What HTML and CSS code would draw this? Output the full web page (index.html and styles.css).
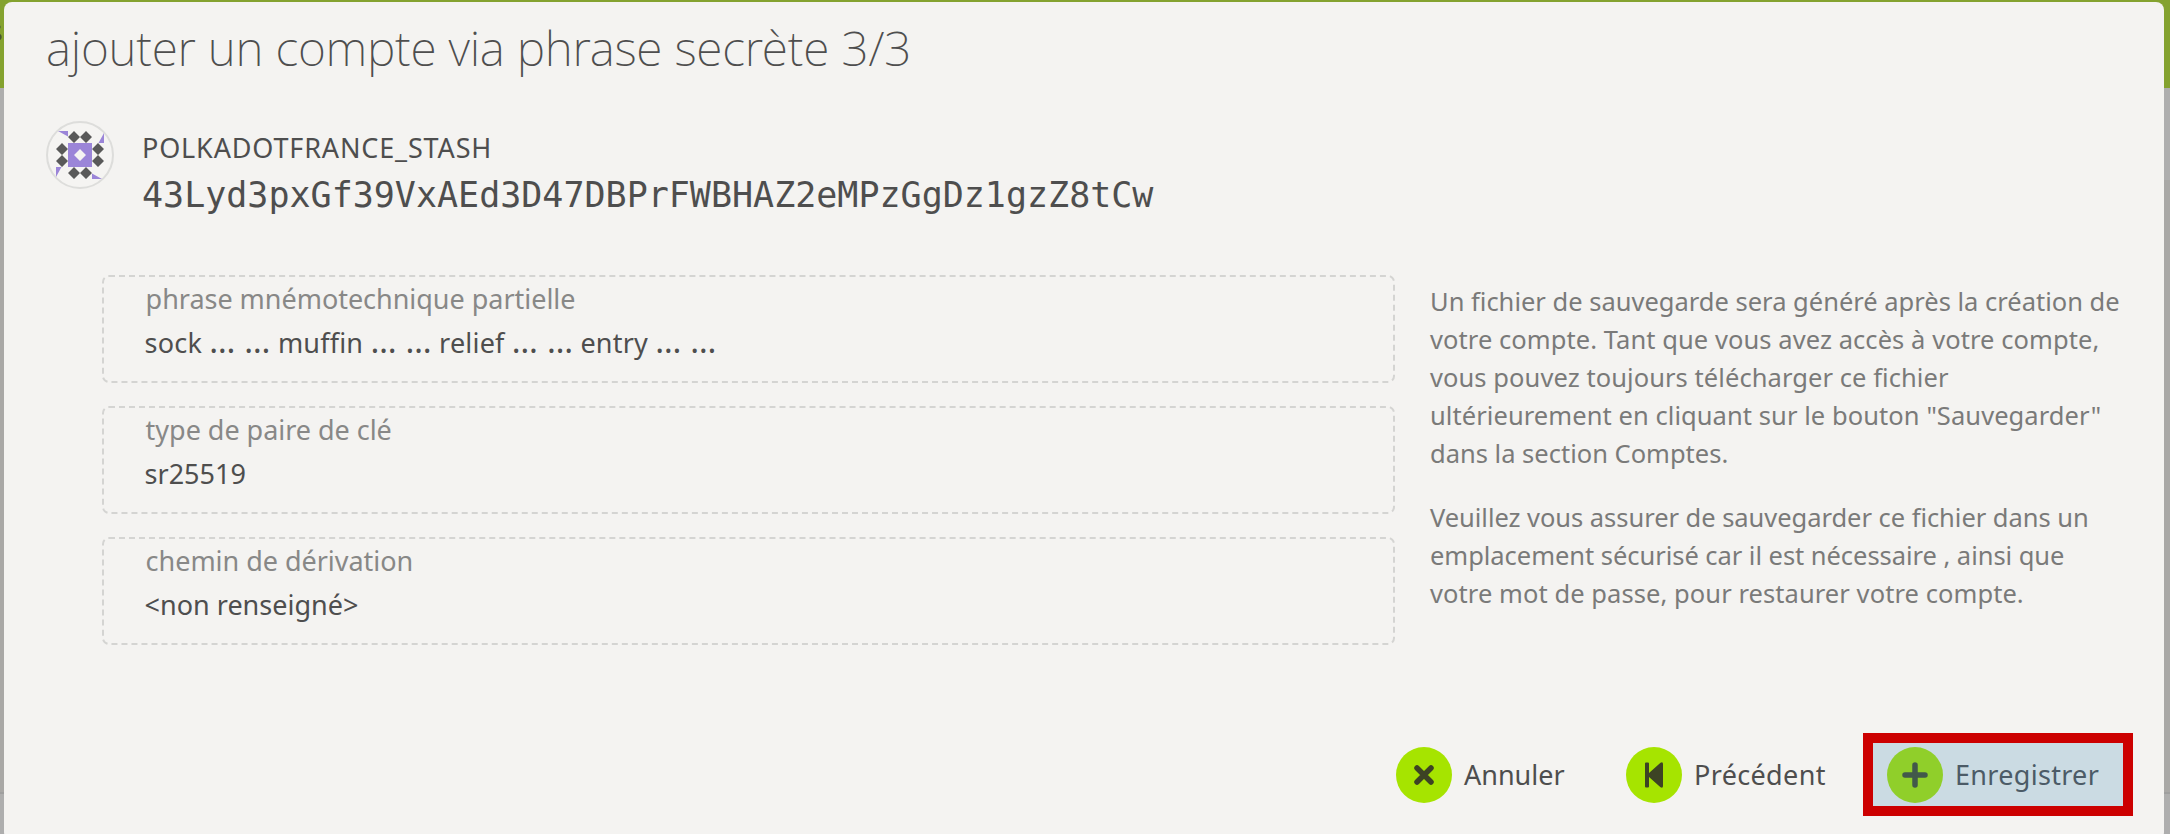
FILE: index.html
```html
<!DOCTYPE html>
<html lang="fr">
<head>
<meta charset="utf-8">
<title>ajouter un compte</title>
<link rel="stylesheet" href="styles.css">
</head>
<body>
<main class="modal">
  <h1 class="title">ajouter un compte via phrase secrète 3/3</h1>
  <section class="account">
    <svg class="avatar" viewBox="0 0 68 68">
      <circle cx="34" cy="34" r="33" fill="#f5f4f2" stroke="#dddddb" stroke-width="2"/>
      <g fill="#9b85d8">
        <path d="M22 22H46V46H22ZM34 28L28 34L34 40L40 34Z" fill-rule="evenodd"/>
        <path d="M12 10H22V15.500ZM58 12V22H52.500ZM46 52.500L56 58H46ZM10 46H15.500L10 56Z"/>
      </g>
      <path fill="#595959" d="M28 10l6 6-6 6-6-6zM40 10l6 6-6 6-6-6zM28 46l6 6-6 6-6-6zM40 46l6 6-6 6-6-6zM16 22l6 6-6 6-6-6zM16 34l6 6-6 6-6-6zM52 22l6 6-6 6-6-6zM52 34l6 6-6 6-6-6z"/>
    </svg>
    <div>
      <div class="name">POLKADOTFRANCE_STASH</div>
      <div class="address">43Lyd3pxGf39VxAEd3D47DBPrFWBHAZ2eMPzGgDz1gzZ8tCw</div>
    </div>
  </section>
  <section class="content">
    <div class="fields">
      <div class="field"><div class="label">phrase mnémotechnique partielle</div><div class="value mnemonic">sock <span>… …</span> muffin <span>… …</span> relief <span>… …</span> entry <span>… …</span></div></div>
      <div class="field"><div class="label">type de paire de clé</div><div class="value">sr25519</div></div>
      <div class="field"><div class="label">chemin de dérivation</div><div class="value">&lt;non renseigné&gt;</div></div>
    </div>
    <aside class="help">
      <p>Un fichier de sauvegarde sera généré après la création de<br><span class="wide">votre compte. Tant que vous avez accès à votre compte,</span><br><span class="wide">vous pouvez toujours télécharger ce fichier</span><br><span class="wide">ultérieurement en cliquant sur le bouton "Sauvegarder"</span><br>dans la section Comptes.</p>
      <p><span class="tight">Veuillez vous assurer de sauvegarder ce fichier dans un</span><br><span class="tight">emplacement sécurisé car il est nécessaire , ainsi que</span><br><span class="wide">votre mot de passe, pour restaurer votre compte.</span></p>
    </aside>
  </section>
  <footer class="actions">
    <button class="btn cancel"><svg viewBox="0 0 56 56"><circle cx="28" cy="28" r="28" fill="#a6e400"/><path d="M21 21L35 35M35 21L21 35" stroke="#3d4324" stroke-width="5.500" stroke-linecap="round"/></svg>Annuler</button>
    <button class="btn previous"><svg viewBox="0 0 56 56"><circle cx="28" cy="28" r="28" fill="#a6e400"/><path d="M20 15.500h2a1 1 0 0 1 1 1V26L34.500 15.800Q37 14.500 37 17V39Q37 41.500 34.500 40.200L23 30v9.500a1 1 0 0 1-1 1h-2a1 1 0 0 1-1-1v-23a1 1 0 0 1 1-1z" fill="#3d4324"/></svg>Précédent</button>
    <button class="btn save"><svg viewBox="0 0 56 56"><circle cx="28" cy="28" r="28" fill="#90cf2a"/><path d="M18 28H38M28 18V38" stroke="#42584a" stroke-width="5.500" stroke-linecap="round"/></svg>Enregistrer</button>
  </footer>
</main>
</body>
</html>
```
FILE: styles.css
```css
* { box-sizing: border-box; }

body {
  margin: 0;
  height: 834px;
  overflow: hidden;
  padding: 2px 6px 0 4px;
  background:
    radial-gradient(ellipse 2px 3.5px at 0 37px, #47562f 60%, transparent),
    radial-gradient(ellipse 1px 2px at 0 27px, #5f7436 50%, transparent),
    linear-gradient(#84a22f 88px, #aeaeae 88px, #aeaeae 180px, #a9a8a6 180px, #a9a8a6 792px, #9f9f9f 792px, #9f9f9f 794px, #aeaeae 794px);
  font-family: "Noto Sans", sans-serif;
  color: #4e4e4e;
}

.modal {
  height: 838px;
  padding: 16px 0 0 42px;
  border-radius: 8px;
  background: #f4f3f1;
}

.title {
  margin: 0;
  font-size: 48px;
  line-height: 60px;
  font-weight: 170;
  letter-spacing: -0.27px;
  color: #4e4e4e;
}

.account {
  display: flex;
  align-items: flex-start;
  gap: 28px;
  margin-top: 43px;
}

.avatar { width: 68px; height: 68px; }

.name {
  margin-top: 7px;
  font-size: 27px;
  line-height: 40px;
  letter-spacing: 0.85px;
}

.address {
  margin-top: 5px;
  font: 35px/44px "DejaVu Sans Mono", monospace;
}

.content {
  display: flex;
  gap: 35px;
  margin: 58px 0 0 56px;
}

.fields {
  display: flex;
  flex-direction: column;
  gap: 23px;
  width: 1293px;
}

.field {
  height: 108px;
  padding: 1px 40px 0 40.6px;
  border: 2px dashed #d4d4d2;
  border-radius: 7px;
  font-size: 27px;
  line-height: 40px;
}

.label { margin-top: 1px; padding-left: 1px; color: #888887; letter-spacing: -0.03px; }
.value { margin-top: 4px; }
.mnemonic { letter-spacing: 0.2px; }
.mnemonic span { font-size: 33px; line-height: 0; }

.help {
  padding-top: 7px;
  font-size: 25.5px;
  line-height: 38px;
  color: #7a7a79;
  white-space: nowrap;
}

.help p { margin: 0 0 26px; }
.wide { letter-spacing: 0.07px; }
.tight { letter-spacing: -0.04px; }

.actions {
  display: flex;
  align-items: center;
  height: 83px;
  margin-top: 88px;
  padding-left: 1350px;
}

.btn {
  display: flex;
  align-items: center;
  gap: 12px;
  padding: 0;
  border: 0;
  background: none;
  font: 27px/40px "Noto Sans", sans-serif;
  color: #4e4e4e;
  white-space: nowrap;
}

.btn svg { width: 56px; height: 56px; fill: none; }
.cancel { width: 230px; }
.previous { width: 237px; letter-spacing: 0.35px; }

.save {
  width: 270px;
  height: 83px;
  padding-left: 14px;
  border: 10px solid #cc0000;
  background: #cbdbe3;
  color: #4c5b67;
  letter-spacing: 0.3px;
}
```
